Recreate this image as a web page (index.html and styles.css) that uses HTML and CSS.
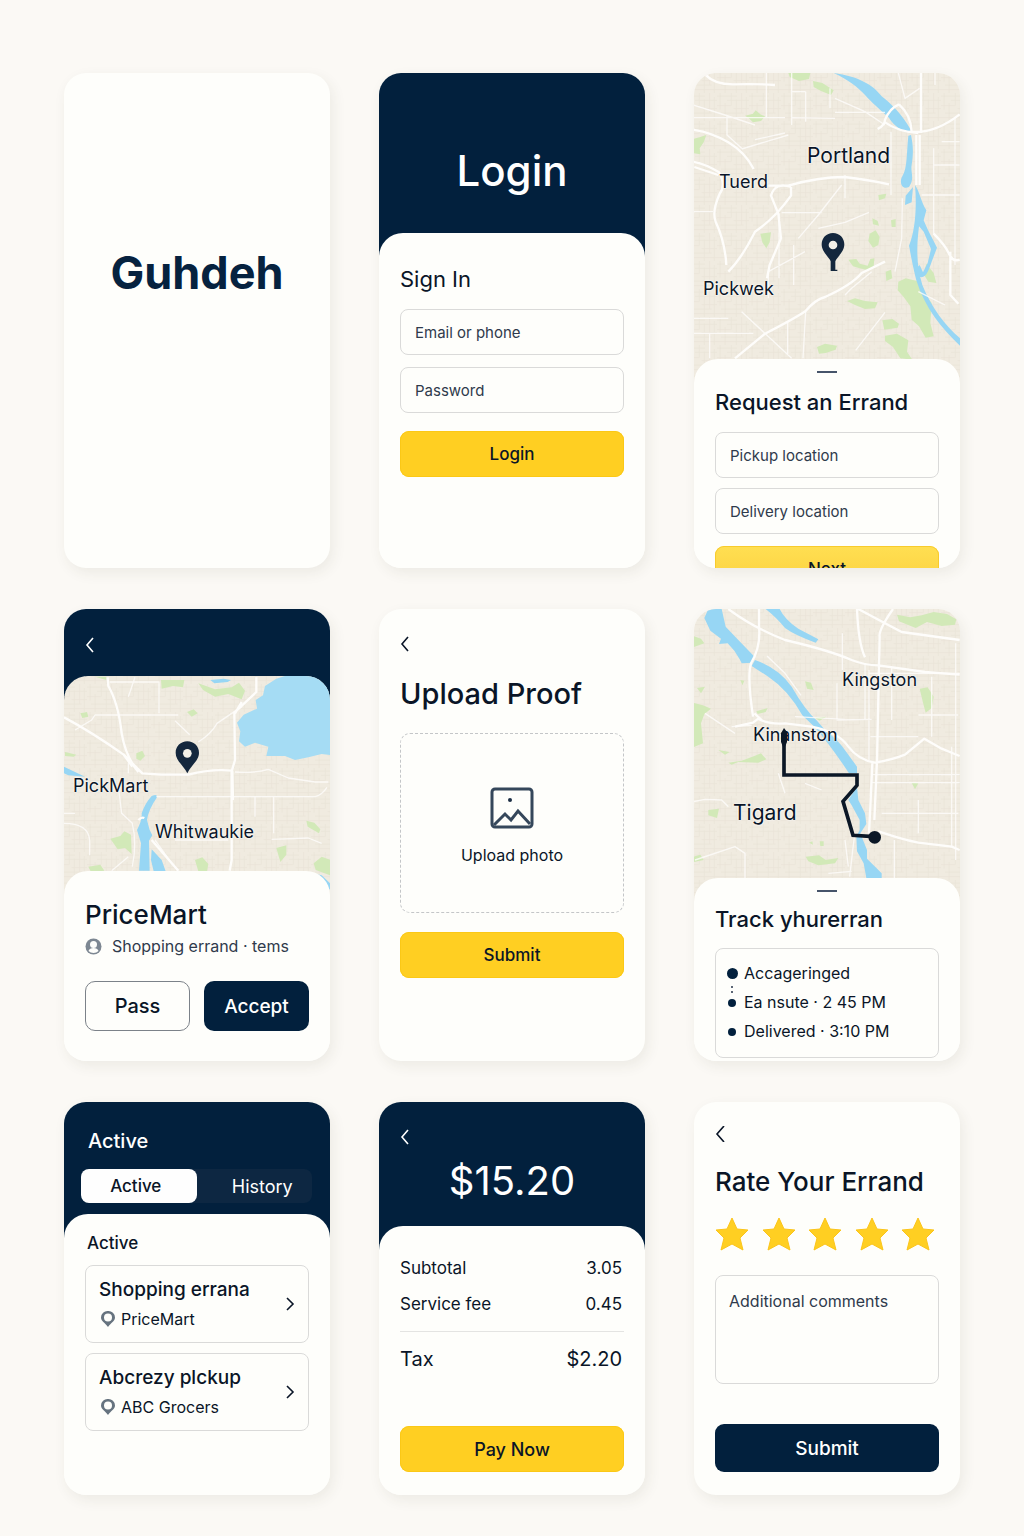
FILE: index.html
```html
<!DOCTYPE html>
<html lang="en">
<head>
<meta charset="utf-8">
<meta name="viewport" content="width=device-width, initial-scale=1">
<title>Guhdeh</title>
<link rel="stylesheet" href="styles.css">
</head>
<body>
<main class="board">

  <section class="screen screen-splash">
    <h1 class="brand">Guhdeh</h1>
  </section>

  <section class="screen">
    <header class="hero hero-login"><h2 class="hero-title">Login</h2></header>
    <form class="sheet sheet-login">
      <h3 class="signin-title">Sign In</h3>
      <div class="fields fields-login">
        <input class="field" type="text" placeholder="Email or phone" aria-label="Email or phone">
        <input class="field" type="password" placeholder="Password" aria-label="Password">
      </div>
      <button class="btn btn-yellow" type="button">Login</button>
    </form>
  </section>

  <section class="screen screen-request">
    <div class="map map-request">
      <svg class="map-art" viewBox="27 24 798 936" preserveAspectRatio="xMidYMin slice" aria-hidden="true">
        <defs>
          <pattern id="blocks" width="96" height="84" patternUnits="userSpaceOnUse">
            <path class="street" d="M0 9H60M30 22H96M0 38H42M50 47H96M12 60H80M0 74H96M9 0V50M24 30V84M43 0V38M58 20V84M74 0V60M88 12V84"/>
          </pattern>
        </defs>
        <rect class="land" x="0" y="0" width="900" height="1000"/>
        <rect x="0" y="0" width="900" height="1000" fill="url(#blocks)"/>
        <path class="park" d="M310 24h66l-4 18-30 6-28-12zM384 48l28 6 34 22-8 14-30-12-22-12zM180 152l24-6 8-10 14 12 14 6-12 14-24 4-14-14zM24 222l22-6 18-6-8 22-12 18 2 18-22-4zM562 460l16 8 4 14-18-4zM618 466l14-4v24h-12zM554 506l18-10 12 20-4 24-16 8-14-20zM490 584l24-2 10 14 24 6 8-20 12-2-2 26-16 10-26-6-20-6zM602 620l16-6 4 26-18 8zM640 650l22-10 34 8 24 40 20 26-4 60 10 40-24 4-20-34-22-20-4-40-20-28-18-20zM486 708l24-8 30 8 38 4-8 18-30 2-30-12zM592 766l30-4 20 14-4 12-40 6zM600 812l36-6 34 20-4 34 16 24-36-4-22-34-24-18zM396 846l24-10 36 6-4 12-30 10-20 2zM724 596l22 28 8 30-24-4-14-22zM226 506l32-4-4 30-10 18-12-18zM580 390l24-4-4 14-18 6z"/>
        <path class="water" d="M446 24C520 34 565 60 590 94C620 118 650 146 678 196L660 200C640 190 622 176 612 158C580 130 560 112 540 90C520 68 490 44 446 24zM678 210C684 240 686 260 680 300C676 322 690 340 672 366C650 376 642 350 652 334C668 306 664 268 670 212zM684 366L680 412L660 420L662 392zM690 360C704 380 708 410 724 436L716 466C730 500 742 520 756 548L740 590C732 612 724 640 706 636L694 612L704 600L714 622L728 594L738 552L716 500L702 484C694 550 694 600 712 660C740 730 780 780 825 820V842C770 790 720 730 694 646C680 590 676 560 672 542C690 500 696 430 690 360z"/>
        <path class="road-s" d="M244 24V160M320 78V180M362 80V170M435 70V130M24 120L120 150L210 180M210 224L300 204M170 252L310 210M24 158H300M450 142H600M322 158L450 160M320 24V80H362M24 440H84M290 443H410M282 446V640M326 540V660M750 24V60M640 24L660 100L704 70M810 160V600M744 300H824M710 390H824M746 250V510M480 330V400M470 360L400 450L340 520M552 442L480 472L400 490M24 805H205M74 806V880M308 770V870M362 740L354 880M170 740L320 880M600 742L512 856M360 560L250 620V700M126 154V210L170 250M618 200V390M652 400L650 520L630 620M560 620L500 670L480 690M24 760H130M700 680L780 720M770 230H824M450 100L540 140L600 180"/>
        <path class="road" d="M60 28Q90 60 150 58T270 60M24 194Q80 202 130 232T206 312M24 290Q60 296 102 322Q124 360 104 386Q80 440 92 470Q120 530 124 600M130 620Q170 580 210 500Q270 460 318 392V366M250 362H310Q400 336 478 336Q550 344 612 358M318 366Q270 350 258 392L280 446L288 520L254 600L246 640M578 192Q600 180 600 164Q614 130 642 118M642 118Q678 150 680 200Q750 206 824 148M600 172Q640 200 700 204M708 24V204M694 210V360M704 210V360M746 506Q780 540 792 566T824 584M796 560V690L820 716M150 880L240 806Q330 760 362 738Q390 704 420 696Q500 660 530 624L600 590M28 306L100 330"/>
        <path class="pin" d="M444 504c-20 0-34 15-34 34 0 24 22 36 34 62 12-26 34-38 34-62 0-19-14-34-34-34z"/>
        <path class="pin" d="M437 580h14v34h6v4h-20z"/>
        <circle class="pin-eye" cx="444" cy="540" r="13"/>
      </svg>
      <span class="place place-portland">Portland</span>
      <span class="place place-tuerd">Tuerd</span>
      <span class="place place-pickwek">Pickwek</span>
    </div>
    <form class="sheet sheet-request">
      <span class="handle"></span>
      <h3 class="sheet-title">Request an Errand</h3>
      <div class="fields fields-request">
        <input class="field" type="text" placeholder="Pickup location" aria-label="Pickup location">
        <input class="field" type="text" placeholder="Delivery location" aria-label="Delivery location">
      </div>
      <button class="btn btn-next" type="button">Next</button>
    </form>
  </section>

  <section class="screen">
    <header class="hero hero-offer">
      <button class="back" type="button" aria-label="Back"><svg class="chevron" viewBox="0 0 10 16"><path d="M8 1L2 8l6 7"/></svg></button>
    </header>
    <div class="map map-offer">
      <svg class="map-art" viewBox="27 228 798 663" preserveAspectRatio="xMidYMin slice" aria-hidden="true">
        <rect class="land" x="0" y="200" width="900" height="720"/>
        <rect x="0" y="200" width="900" height="720" fill="url(#blocks)"/>
        <path class="park" d="M318 240h70l-4 22-30-4-34 8zM430 250l50 18 50-6 22-14 18 24-10 26-40-16-40 8-36-20zM76 340l20-4 4 14-18 4zM396 336l20-8 12 12-18 10zM244 460l18-8 8 16-14 14-12-6zM166 716l30-8 12-14 20 10 2 58-20-18-22 4zM754 662l24 6 18 20-4 12-34-20zM776 790l24-20 26 10v46l-44-16zM664 744l30-8v28l-18 22zM420 780l22-8 18 20-4 22h-26zM30 456l34 8-8 6-26-2zM100 800l36-6 12 18-40 4zM120 230h34v10z"/>
        <path class="lake" d="M664 236L690 228H830V466L800 462L760 472L720 480L690 468L634 468L640 440L600 428L570 440L552 424L556 394L546 368L566 344L606 326L602 300L624 286L630 258z"/>
        <path class="water" d="M466 240l40-4 22 4-10 6-40 4zM27 500L60 516L90 530L40 526L27 520zM290 588Q308 580 306 592Q280 630 276 660L284 690L292 706L282 722L284 812H252L258 730L246 690Q262 660 260 640Q270 610 290 588zM290 748L320 780L332 814H296L288 780zM770 820L800 826L825 850V870Q800 830 770 820z"/>
        <path class="road-s" d="M164 246H312V340M60 390L110 360L120 345H370M360 362L404 404M240 232L220 290M430 426Q470 400 486 370L560 320M304 590H780Q800 586 816 562M540 516Q600 520 640 508L700 534L780 546H820M220 490V520M190 560L200 640L232 670Q246 730 232 800M27 670Q100 670 104 720V766M300 720L350 790M650 718L760 714L800 730M170 812L220 770M27 640H60M656 590V700M600 590V650M360 720H520"/>
        <path class="road" d="M27 352Q110 396 206 464L262 520L320 524H400Q470 506 530 512M158 232L160 258Q190 310 200 400Q212 470 250 516M604 232V276L538 338L540 480L530 514V780L524 812M532 512L534 600M250 660Q260 650 268 654M290 720L370 812M206 464L232 500M560 306L540 340"/>
        <path class="pin" d="M397 424c-20 0-35 15-35 34 0 24 22 36 35 62 12-26 35-38 35-62 0-19-15-34-35-34z"/>
        <circle class="pin-eye" cx="397" cy="460" r="13"/>
      </svg>
      <span class="place place-pickmart">PickMart</span>
      <span class="place place-whitwaukie">Whitwaukie</span>
    </div>
    <div class="sheet sheet-offer">
      <h3 class="offer-title">PriceMart</h3>
      <p class="offer-meta">
        <svg class="person" viewBox="0 0 17 17" aria-hidden="true"><circle class="person-ring" cx="8.500" cy="8.500" r="8"/><circle class="person-body" cx="8.500" cy="6.500" r="3.500"/><path class="person-body" d="M3.500 13c.5-2 2.500-3 5-3s4.500 1 5 3a7 7 0 0 1-10 0z"/></svg>
        Shopping errand · tems
      </p>
      <div class="actions">
        <button class="btn btn-outline" type="button">Pass</button>
        <button class="btn btn-accept" type="button">Accept</button>
      </div>
    </div>
  </section>

  <section class="screen screen-upload">
    <button class="back back-dark" type="button" aria-label="Back"><svg class="chevron" viewBox="0 0 10 16"><path d="M8 1L2 8l6 7"/></svg></button>
    <h2 class="upload-title">Upload Proof</h2>
    <label class="dropzone">
      <input class="hidden-input" type="file">
      <svg class="picture" viewBox="0 0 44 42" aria-hidden="true"><rect x="2" y="2" width="40" height="38" rx="3"/><path d="M4 38L15 27l6 6 7-9 12 13"/><circle class="picture-sun" cx="20" cy="13" r="2"/></svg>
      <span>Upload photo</span>
    </label>
    <button class="btn btn-yellow" type="button">Submit</button>
  </section>

  <section class="screen">
    <div class="map map-track">
      <svg class="map-art" viewBox="27 27 798 885" preserveAspectRatio="xMidYMin slice" aria-hidden="true">
        <rect class="land" x="0" y="0" width="900" height="950"/>
        <rect x="0" y="0" width="900" height="950" fill="url(#blocks)"/>
        <path class="park" d="M636 44l40 8 34-6 36-10 40 6 28 16-4 16-40 4-44-12-34 18-50-20zM24 108l24 8 10 14-34 12zM24 308l30 8 24 10-20 16-10 28 6 60-30 12zM360 244l18 4 8 22-20-4zM704 266l24-4 18 28-6 34-18 14-8-30zM130 488l40-6 38-14 20-8 16 18-24 10-60-2-20 8zM70 630l32-4-6 28-26-8zM362 770l40-4 20 14 38-6-10 16-50 6-30-12zM214 334l34-10-6 12-24 6zM680 548l20 2-10 18zM26 770l20-6 10 16-30 6zM372 728l10-4 2 10zM404 724h12v14h-10zM166 240l12 2-6 14zM36 264l24-4-12 20zM100 450l34 6-14 8z"/>
        <path class="water" d="M70 27H110L122 80L160 120L210 172L202 188L170 190L164 178L148 152L128 130L102 132L108 116L76 92L58 54zM210 180Q280 204 320 260Q360 330 396 362L420 390Q460 420 484 456L516 500V520H492Q440 440 388 380L352 346Q310 270 250 230L200 198zM242 27H284Q300 60 340 86L400 118L392 128Q330 106 300 84Q276 54 242 27zM516 560L520 600L540 640L544 672L526 700L546 750V776L590 820V834H544L536 790L516 754L514 710L524 690V660L500 616L490 600z"/>
        <path class="park" d="M390 354l34-4-20 12z"/>
        <path class="road-s" d="M472 100V210M246 168L300 220L348 286M456 250V360L560 358M330 350L480 358M556 410H700M560 548H824M560 524H824M540 190V360M552 210V480M812 130V780M800 440V740M24 605L60 598L110 600L130 620M30 780L150 740L180 760V834M430 820L500 814M480 720L490 800M508 710L494 830M628 720V834M552 220H824M60 340L150 400M140 380L200 376M280 520L300 580M360 550L410 570M740 230V410M620 200V360M700 600V700M820 345H700M590 640H820"/>
        <path class="road" d="M130 27Q200 80 300 120Q430 150 500 180Q540 196 580 196L720 216L824 224M222 27V80Q228 140 198 190Q186 230 204 350M150 380L204 368L220 356Q250 374 300 370L380 380Q460 396 490 440Q520 480 570 488Q620 480 660 464L718 416L770 446L824 468M516 27Q520 130 540 172M520 27Q600 70 650 96L824 120M624 27Q580 90 584 110L576 480L568 660M562 490L556 620L552 700M580 694Q660 720 700 728L800 740L824 750M208 340L230 360"/>
      </svg>
      <span class="place place-kingston">Kingston</span>
      <span class="place place-kinanston">Kinanston</span>
      <span class="place place-tigard">Tigard</span>
      <svg class="map-art map-route" viewBox="27 27 798 885" preserveAspectRatio="xMidYMin slice" aria-hidden="true">
        <path class="route" d="M297 400V525H516V556L474 604L504 706L566 710"/>
        <path class="route-end" d="M288 400L297 384L306 396V426L300 440H294L288 426z"/>
        <circle class="route-end" cx="569" cy="712" r="19"/>
      </svg>
    </div>
    <div class="sheet sheet-track">
      <span class="handle"></span>
      <h3 class="sheet-title">Track yhurerran</h3>
      <ul class="timeline">
        <li class="step step-current">Accageringed</li>
        <li class="step">Ea nsute · 2 45 PM</li>
        <li class="step">Delivered · 3:10 PM</li>
      </ul>
    </div>
  </section>

  <section class="screen">
    <header class="hero hero-list">
      <h2 class="list-title">Active</h2>
      <div class="tabs">
        <button class="tab tab-on" type="button">Active</button>
        <button class="tab tab-off" type="button">History</button>
      </div>
    </header>
    <div class="sheet sheet-list">
      <h3 class="list-label">Active</h3>
      <a class="job" href="#pricemart">
        <span class="job-text">
          <strong class="job-name">Shopping errana</strong>
          <span class="job-place"><svg class="spot" viewBox="0 0 14 18" aria-hidden="true"><path d="M7 1a6.500 6.500 0 0 0-7 6.500c0 4 4 5 7 9.500 3-4.500 7-5.500 7-9.500A6.500 6.500 0 0 0 7 1zm0 2.500a4 4 0 1 1 0 8 4 4 0 0 1 0-8z"/></svg>PriceMart</span>
        </span>
        <svg class="chevron chevron-go" viewBox="0 0 10 16" aria-hidden="true"><path d="M2 2l6 6-6 6"/></svg>
      </a>
      <a class="job" href="#grocers">
        <span class="job-text">
          <strong class="job-name">Abcrezy plckup</strong>
          <span class="job-place"><svg class="spot" viewBox="0 0 14 18" aria-hidden="true"><path d="M7 1a6.500 6.500 0 0 0-7 6.500c0 4 4 5 7 9.500 3-4.500 7-5.500 7-9.500A6.500 6.500 0 0 0 7 1zm0 2.500a4 4 0 1 1 0 8 4 4 0 0 1 0-8z"/></svg>ABC Grocers</span>
        </span>
        <svg class="chevron chevron-go" viewBox="0 0 10 16" aria-hidden="true"><path d="M2 2l6 6-6 6"/></svg>
      </a>
    </div>
  </section>

  <section class="screen">
    <header class="hero hero-pay">
      <button class="back" type="button" aria-label="Back"><svg class="chevron" viewBox="0 0 10 16"><path d="M8 1L2 8l6 7"/></svg></button>
      <h2 class="amount">$15.20</h2>
    </header>
    <div class="sheet sheet-pay">
      <table class="bill">
        <tbody>
          <tr><th scope="row">Subtotal</th><td>3.05</td></tr>
          <tr><th scope="row">Service fee</th><td>0.45</td></tr>
        </tbody>
        <tfoot>
          <tr><th scope="row">Tax</th><td>$2.20</td></tr>
        </tfoot>
      </table>
      <button class="btn btn-yellow btn-pay" type="button">Pay Now</button>
    </div>
  </section>

  <section class="screen screen-rate">
    <button class="back back-dark" type="button" aria-label="Back"><svg class="chevron" viewBox="0 0 10 16"><path d="M9 0L2 8l7 8"/></svg></button>
    <h2 class="rate-title">Rate Your Errand</h2>
    <div class="stars" role="radiogroup" aria-label="Rating">
      <label class="star"><input class="hidden-input" type="radio" name="rating" aria-label="1 star"><svg viewBox="0 0 34 34"><path d="M17 1l5 11 11 1-8 8 3 12-11-6-11 6 3-12-8-8 11-1z"/></svg></label>
      <label class="star"><input class="hidden-input" type="radio" name="rating" aria-label="2 stars"><svg viewBox="0 0 34 34"><path d="M17 1l5 11 11 1-8 8 3 12-11-6-11 6 3-12-8-8 11-1z"/></svg></label>
      <label class="star"><input class="hidden-input" type="radio" name="rating" aria-label="3 stars"><svg viewBox="0 0 34 34"><path d="M17 1l5 11 11 1-8 8 3 12-11-6-11 6 3-12-8-8 11-1z"/></svg></label>
      <label class="star"><input class="hidden-input" type="radio" name="rating" aria-label="4 stars"><svg viewBox="0 0 34 34"><path d="M17 1l5 11 11 1-8 8 3 12-11-6-11 6 3-12-8-8 11-1z"/></svg></label>
      <label class="star"><input class="hidden-input" type="radio" name="rating" aria-label="5 stars" checked><svg viewBox="0 0 34 34"><path d="M17 1l5 11 11 1-8 8 3 12-11-6-11 6 3-12-8-8 11-1z"/></svg></label>
    </div>
    <textarea class="comments" placeholder="Additional comments" aria-label="Additional comments"></textarea>
    <button class="btn btn-navy" type="button">Submit</button>
  </section>

</main>
</body>
</html>
```

FILE: styles.css
```css
:root {
  --navy: #02203d;
  --ink: #0a1527;
  --slate: #2f3a4c;
  --line: #dadad9;
  --card: #fefefb;
  --yellow: #ffcf22;
  --lap: 24px;
}

* { box-sizing: border-box; }

body {
  margin: 0;
  background: #fbf9f5;
  color: var(--ink);
  font-family: Inter, "Liberation Sans", sans-serif;
}

h1, h2, h3, p, ul { margin: 0; padding: 0; font-weight: 500; }

button, input, textarea { font: inherit; color: inherit; }

button { border: 0; cursor: pointer; }

.board {
  display: grid;
  grid-template-columns: repeat(3, minmax(0, 1fr));
  gap: 41px 49px;
  padding: 73px 64px 41px;
}

.screen {
  display: flex;
  flex-direction: column;
  overflow: hidden;
  border-radius: 22px;
  background: var(--card);
  box-shadow: 3px 5px 14px rgba(70, 60, 40, 0.08);
}

/* shared parts */
.hero { background: var(--navy); color: #fff; }

.sheet {
  position: relative;
  display: flex;
  flex-direction: column;
  flex: 1;
  margin-top: calc(-1 * var(--lap));
  padding: 0 21px;
  border-radius: var(--lap) var(--lap) 0 0;
  background: var(--card);
}

.sheet-title { font-size: 22px; line-height: 28px; }

.handle {
  flex: none;
  align-self: center;
  width: 20px;
  height: 2px;
  margin: 12px 0 15px;
  background: #46546a;
}

.fields { display: flex; flex-direction: column; }

.field {
  width: 100%;
  height: 46px;
  padding: 0 14px;
  border: 1px solid var(--line);
  border-radius: 8px;
  background: transparent;
  font-size: 15px;
}

.field::placeholder, .comments::placeholder { color: var(--slate); opacity: 1; }

.btn {
  height: 46px;
  padding: 0;
  border-radius: 9px;
  font-size: 17px;
  font-weight: 500;
}

.btn-yellow { background: var(--yellow); box-shadow: inset 0 0 0 1px #fbc816; }

.back {
  display: flex;
  align-self: flex-start;
  padding: 0;
  background: none;
  color: #fff;
}

.back-dark { color: var(--ink); }

.chevron {
  width: 10px;
  height: 16px;
  fill: none;
  stroke: currentColor;
  stroke-width: 1.600;
}

.hidden-input {
  position: absolute;
  width: 1px;
  height: 1px;
  margin: 0;
  opacity: 0;
}

/* splash */
.screen-splash { min-height: 495px; align-items: center; padding-top: 172px; }

.brand { color: #06223f; font-size: 45px; font-weight: 700; line-height: 56px; }

/* login */
.hero-login { padding: 72px 0 60px; text-align: center; }
.hero-title { font-size: 42px; line-height: 52px; }
.sheet-login { padding-top: 32px; }
.signin-title { font-size: 22px; font-weight: 400; line-height: 28px; }
.fields-login { gap: 12px; margin: 16px 0 18px; }

/* maps */
.map { position: relative; overflow: hidden; }
.map-art { display: block; width: 100%; height: 100%; }
.map-route { position: absolute; inset: 0; }
.map-request { flex: none; height: 310px; }
.map-offer { height: 219px; margin-top: calc(-1 * var(--lap)); border-radius: var(--lap) var(--lap) 0 0; }
.map-track { height: 293px; }

.land { fill: #f0ebe0; }
.street { fill: none; stroke: #e9e3d7; stroke-width: 2; }
.park { fill: #d2e9b8; }
.water { fill: #97d6f4; }
.lake { fill: #a5dcf4; }
.road, .road-s { fill: none; stroke: #fefdfb; stroke-linejoin: round; }
.road { stroke-width: 7; }
.road-s { stroke-width: 4; opacity: 0.8; }
.pin { fill: #14273d; }
.pin-eye { fill: #f3f0e8; }
.route { fill: none; stroke: #0b1726; stroke-width: 11; }
.route-end { fill: #0b1726; }

.place {
  position: absolute;
  font-size: 18px;
  line-height: 24px;
  text-shadow: 0 0 2px #fff, 0 0 2px #fff;
}

.place-portland { left: 113px; top: 71px; font-size: 21px; }
.place-tuerd { left: 25px; top: 97px; }
.place-pickwek { left: 9px; top: 204px; }
.place-pickmart { left: 9px; top: 98px; }
.place-whitwaukie { left: 91px; top: 144px; }
.place-kingston { left: 148px; top: 59px; }
.place-kinanston { left: 59px; top: 114px; }
.place-tigard { left: 39px; top: 192px; font-size: 21px; }

/* request */
.screen-request { height: 495px; }
.sheet-request { overflow: hidden; }
.fields-request { gap: 10px; margin: 16px 0 12px; }
.btn-next { flex: none; background: linear-gradient(#ffdf52, #fbcf3c); box-shadow: inset 0 0 0 1px #f8cb2c; }

/* offer */
.hero-offer { padding: 28px 21px 47px; }
.sheet-offer { padding-top: 28px; padding-bottom: 30px; }
.offer-title { font-size: 26px; line-height: 32px; }
.offer-meta {
  display: flex;
  align-items: center;
  gap: 10px;
  margin: 5px 0 25px;
  color: var(--slate);
  font-size: 16px;
  font-weight: 400;
  line-height: 20px;
}
.person { width: 17px; height: 17px; }
.person-ring { fill: #7d8792; }
.person-body { fill: var(--card); }
.actions { display: grid; grid-template-columns: 1fr 1fr; gap: 14px; }
.actions .btn { height: 50px; border-radius: 10px; font-size: 20px; }
.btn-outline { border: 1px solid #7c8289; background: transparent; }
.btn-accept, .btn-navy { background: var(--navy); color: #fff; }
.actions .btn-accept { font-size: 19px; }

/* upload */
.screen-upload { padding: 27px 21px; }
.upload-title { margin: 22px 0 19px; font-size: 29px; line-height: 40px; }
.dropzone {
  display: flex;
  flex-direction: column;
  align-items: center;
  gap: 16px;
  height: 180px;
  margin-bottom: 19px;
  padding-top: 53px;
  border: 1px dashed #c4c6c8;
  border-radius: 10px;
  font-size: 16px;
  line-height: 20px;
}
.picture { width: 44px; height: 42px; fill: none; stroke: #35475b; stroke-width: 3; }
.picture-sun { fill: #1c2e44; stroke: none; }

/* tracking */
.sheet-track { padding-bottom: 3px; }
.timeline {
  display: flex;
  flex-direction: column;
  margin-top: 15px;
  padding: 10px 11px 11px;
  border: 1px solid var(--line);
  border-radius: 8px;
  list-style: none;
}
.sheet-track .handle { margin-bottom: 13px; }
.step {
  display: flex;
  align-items: center;
  gap: 6px;
  font-size: 16px;
  font-weight: 400;
  line-height: 29px;
}
.step::before {
  content: "";
  width: 8px;
  height: 8px;
  margin: 0 2px 0 1px;
  border-radius: 50%;
  background: var(--navy);
}
.step-current { position: relative; }
.step-current::before { width: 11px; height: 11px; margin: 0; }
.step-current::after {
  content: "";
  position: absolute;
  left: 4px;
  bottom: -5px;
  height: 7px;
  border-left: 2px dotted #5c6675;
}

/* activity */
.hero-list { padding: 26px 18px 35px 17px; }
.list-title { padding-left: 7px; font-size: 20px; line-height: 26px; }
.tabs {
  display: grid;
  grid-template-columns: 1fr 1fr;
  margin-top: 15px;
  border-radius: 8px;
  background: #0d2742;
}
.tab { height: 34px; padding: 0; border-radius: 8px; background: none; font-size: 18px; color: #fff; }
.tab-on { padding-right: 6px; background: #fefefe; color: var(--ink); font-size: 17px; font-weight: 500; }
.tab-off { padding-left: 16px; }
.sheet-list { padding-top: 18px; gap: 10px; }
.list-label { padding-left: 2px; font-size: 17px; line-height: 23px; }
.job {
  display: flex;
  align-items: center;
  justify-content: space-between;
  padding: 11px 13px;
  border: 1px solid var(--line);
  border-radius: 8px;
  color: inherit;
  text-decoration: none;
}
.job-text { display: flex; flex-direction: column; gap: 4px; }
.job-name { font-size: 19px; font-weight: 500; line-height: 26px; }
.job-place { display: flex; align-items: center; gap: 6px; padding-left: 2px; font-size: 16px; line-height: 24px; }
.spot { width: 14px; height: 18px; fill: #66737f; }

/* payment */
.hero-pay { display: flex; flex-direction: column; padding: 27px 21px 45px; }
.amount { padding-top: 12px; font-size: 40px; font-weight: 400; line-height: 48px; text-align: center; }
.sheet-pay { padding-top: 24px; padding-bottom: 23px; }
.bill { width: 100%; border-collapse: collapse; font-size: 17px; line-height: 36px; }
.bill th { padding: 0; font-weight: 400; text-align: left; }
.bill td { padding: 0 2px; text-align: right; }
.bill tbody tr:last-child > * { padding-bottom: 9px; border-bottom: 1px solid #e4e4e2; }
.bill tfoot { font-size: 20px; }
.bill tfoot tr > * { padding-top: 9px; }
.btn-pay { margin-top: auto; font-size: 18px; }

/* rating */
.screen-rate { padding: 24px 21px 23px; }
.rate-title { margin: 22px 0 17px; font-size: 26px; line-height: 36px; }
.stars { display: flex; justify-content: space-between; padding-right: 4px; }
.star { display: flex; width: 34px; height: 34px; }
.star svg { width: 100%; fill: var(--yellow); stroke: #fbc41a; stroke-linejoin: round; }
.comments {
  height: 109px;
  margin: 24px 0 40px;
  padding: 14px 13px;
  border: 1px solid var(--line);
  border-radius: 8px;
  background: transparent;
  font-size: 16px;
  line-height: 22px;
  resize: none;
}
.btn-navy { height: 48px; font-size: 19px; }

@media (max-width: 860px) {
  .board { grid-template-columns: repeat(2, minmax(0, 1fr)); padding: 40px 24px; gap: 32px; }
}

@media (max-width: 600px) {
  .board { grid-template-columns: minmax(0, 1fr); }
}
```
